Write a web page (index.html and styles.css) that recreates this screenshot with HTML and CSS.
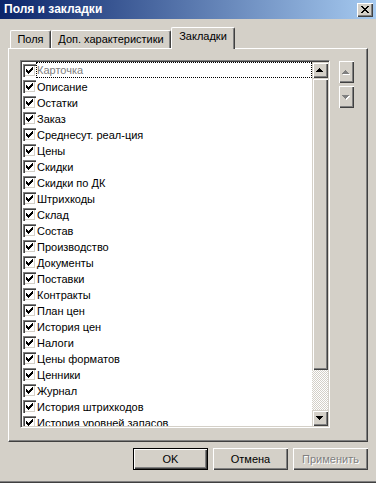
FILE: index.html
```html
<!DOCTYPE html>
<html lang="ru">
<head>
<meta charset="utf-8">
<title>Поля и закладки</title>
<link rel="stylesheet" href="styles.css">
</head>
<body>
<div class="window">
  <div class="titlebar">
    <span class="title">Поля и закладки</span>
    <span class="close"><svg width="16" height="14" viewBox="0 0 16 14" shape-rendering="crispEdges"><path fill="#000" d="M4 3h2v1h-2zM10 3h2v1h-2zM5 4h2v1h-2zM9 4h2v1h-2zM6 5h4v1h-4zM7 6h2v1h-2zM6 7h4v1h-4zM5 8h2v1h-2zM9 8h2v1h-2zM4 9h2v1h-2zM10 9h2v1h-2z"/></svg></span>
  </div>
  <div class="content">
    <div class="tabs">
      <div class="tab tab-fields">Поля</div>
      <div class="tab tab-extra">Доп. характеристики</div>
      <div class="tab tab-marks active">Закладки</div>
    </div>
    <div class="panel">
      <div class="listbox">
        <div class="items">
          <div class="item disabled"><span class="cb"></span><span class="label focus">Карточка</span></div>
          <div class="item"><span class="cb"></span><span class="label">Описание</span></div>
          <div class="item"><span class="cb"></span><span class="label">Остатки</span></div>
          <div class="item"><span class="cb"></span><span class="label">Заказ</span></div>
          <div class="item"><span class="cb"></span><span class="label">Среднесут. реал-ция</span></div>
          <div class="item"><span class="cb"></span><span class="label">Цены</span></div>
          <div class="item"><span class="cb"></span><span class="label">Скидки</span></div>
          <div class="item"><span class="cb"></span><span class="label">Скидки по ДК</span></div>
          <div class="item"><span class="cb"></span><span class="label">Штрихкоды</span></div>
          <div class="item"><span class="cb"></span><span class="label">Склад</span></div>
          <div class="item"><span class="cb"></span><span class="label">Состав</span></div>
          <div class="item"><span class="cb"></span><span class="label">Производство</span></div>
          <div class="item"><span class="cb"></span><span class="label">Документы</span></div>
          <div class="item"><span class="cb"></span><span class="label">Поставки</span></div>
          <div class="item"><span class="cb"></span><span class="label">Контракты</span></div>
          <div class="item"><span class="cb"></span><span class="label">План цен</span></div>
          <div class="item"><span class="cb"></span><span class="label">История цен</span></div>
          <div class="item"><span class="cb"></span><span class="label">Налоги</span></div>
          <div class="item"><span class="cb"></span><span class="label">Цены форматов</span></div>
          <div class="item"><span class="cb"></span><span class="label">Ценники</span></div>
          <div class="item"><span class="cb"></span><span class="label">Журнал</span></div>
          <div class="item"><span class="cb"></span><span class="label">История штрихкодов</span></div>
          <div class="item"><span class="cb"></span><span class="label">История уровней запасов</span></div>
        </div>
        <div class="vscroll">
          <div class="sbtn"><svg width="16" height="16" viewBox="0 0 16 16" shape-rendering="crispEdges"><path fill="#000" d="M7 6h1v1h-1zM6 7h3v1h-3zM5 8h5v1h-5zM4 9h7v1h-7z"/></svg></div>
          <div class="thumb"></div>
          <div class="track"></div>
          <div class="sbtn"><svg width="16" height="16" viewBox="0 0 16 16" shape-rendering="crispEdges"><path fill="#000" d="M4 6h7v1h-7zM5 7h5v1h-5zM6 8h3v1h-3zM7 9h1v1h-1z"/></svg></div>
        </div>
      </div>
      <div class="side">
        <div class="sidebtn"><svg width="15" height="22" viewBox="0 0 15 22" shape-rendering="crispEdges"><path fill="#fff" d="M7 10h1v1h-1zM6 11h3v1h-3zM5 12h5v1h-5zM4 13h7v1h-7z"/><path fill="#808080" d="M6 9h1v1h-1zM5 10h3v1h-3zM4 11h5v1h-5zM3 12h7v1h-7z"/></svg></div>
        <div class="sidebtn"><svg width="15" height="22" viewBox="0 0 15 22" shape-rendering="crispEdges"><path fill="#fff" d="M4 10h7v1h-7zM5 11h5v1h-5zM6 12h3v1h-3zM7 13h1v1h-1z"/><path fill="#808080" d="M3 9h7v1h-7zM4 10h5v1h-5zM5 11h3v1h-3zM6 12h1v1h-1z"/></svg></div>
      </div>
    </div>
    <div class="buttons">
      <button class="btn default"><span class="btn-text">OK</span></button>
      <button class="btn"><span class="btn-text">Отмена</span></button>
      <button class="btn disabled"><span class="btn-text">Применить</span></button>
    </div>
  </div>
</div>
</body>
</html>
```
FILE: styles.css
```css
html, body {
  margin: 0;
  padding: 0;
}
body {
  width: 376px;
  height: 483px;
  overflow: hidden;
  background: #d4d0c8;
  font-family: "Liberation Sans", Arial, sans-serif;
  font-size: 11px;
  color: #000;
}
.window {
  width: 376px;
  height: 483px;
  box-sizing: border-box;
  box-shadow: inset 0 -1px #404040, inset 0 -2px #808080;
}
.titlebar {
  height: 19px;
  background: linear-gradient(to right, #0a246a, #a6caf0);
  display: flex;
  align-items: center;
  justify-content: space-between;
  padding: 0 3px 0 4px;
}
.title {
  color: #fff;
  font-weight: bold;
  font-size: 12px;
  line-height: 19px;
}
.close {
  width: 16px;
  height: 14px;
  background: #d4d0c8;
  box-shadow: inset 1px 1px #fff, inset -1px -1px #404040, inset -2px -2px #808080;
  display: block;
  margin-top: 1px;
}
.close svg { display: block; }
.content {
  padding: 8px 8px 0 8px;
}
.tabs {
  display: flex;
  align-items: flex-end;
  height: 21px;
  padding-left: 2px;
}
.tab {
  box-sizing: border-box;
  height: 18px;
  border-top: 1px solid #fff;
  border-left: 1px solid #fff;
  border-right: 1px solid #404040;
  border-radius: 2px 2px 0 0;
  box-shadow: inset -1px 0 #808080;
  text-align: center;
  padding-top: 2px;
  line-height: 13px;
  white-space: nowrap;
}
.tab-fields { width: 41px; }
.tab-extra { width: 120px; }
.tab-marks { width: 64px; }
.tab.active {
  height: 22px;
  margin-bottom: -1px;
  position: relative;
  z-index: 1;
  background: #d4d0c8;
}
.panel {
  box-sizing: border-box;
  height: 394px;
  border-top: 1px solid #fff;
  border-left: 1px solid #fff;
  border-right: 1px solid #404040;
  border-bottom: 1px solid #404040;
  box-shadow: inset -1px -1px #808080;
  padding: 11px 0 0 11px;
  display: flex;
  align-items: flex-start;
}
.listbox {
  box-sizing: border-box;
  width: 310px;
  height: 368px;
  background: #fff;
  border-top: 1px solid #808080;
  border-left: 1px solid #808080;
  border-right: 1px solid #fff;
  border-bottom: 1px solid #fff;
  box-shadow: inset 1px 1px #404040, inset -1px -1px #d4d0c8;
  padding: 1px;
  display: flex;
}
.items {
  flex: 1;
  height: 364px;
  overflow: hidden;
  padding-left: 1px;
}
.item {
  display: flex;
  height: 16px;
}
.cb {
  box-sizing: border-box;
  flex: none;
  width: 13px;
  height: 13px;
  margin-top: 2px;
  background-color: #fff;
  background-image: url("data:image/svg+xml;utf8,<svg xmlns='http://www.w3.org/2000/svg' width='13' height='13' shape-rendering='crispEdges'><path fill='black' d='M9 3h1v1h-1zM8 4h2v1h-2zM3 5h1v1h-1zM7 5h3v1h-3zM3 6h2v1h-2zM6 6h3v1h-3zM3 7h5v1h-5zM4 8h3v1h-3zM5 9h1v1h-1z'/></svg>");
  box-shadow: inset 1px 1px #808080, inset 2px 2px #404040, inset -1px -1px #fff, inset -2px -2px #d4d0c8;
}
.label {
  flex: 1;
  box-sizing: border-box;
  height: 16px;
  line-height: 16px;
  border: 1px solid transparent;
  padding-left: 0;
  white-space: nowrap;
}
.label.focus {
  border: 1px dotted #000;
  line-height: 14px;
}
.item.disabled .label {
  color: #808080;
}
.vscroll {
  width: 16px;
  flex: none;
  display: flex;
  flex-direction: column;
}
.sbtn {
  width: 16px;
  height: 16px;
  background: #d4d0c8;
  box-shadow: inset 1px 1px #d4d0c8, inset 2px 2px #fff, inset -1px -1px #404040, inset -2px -2px #808080;
}
.sbtn svg { display: block; }
.thumb {
  height: 292px;
  background: #d4d0c8;
  box-shadow: inset 1px 1px #d4d0c8, inset 2px 2px #fff, inset -1px -1px #404040, inset -2px -2px #808080;
}
.track {
  height: 40px;
  background: repeating-conic-gradient(#fff 0 25%, #d4d0c8 0 50%) 0 0 / 2px 2px;
}
.side {
  margin-left: 9px;
  margin-top: 1px;
  display: flex;
  flex-direction: column;
  gap: 3px;
}
.sidebtn {
  width: 15px;
  height: 22px;
  background: #d4d0c8;
  box-shadow: inset 1px 1px #fff, inset -1px -1px #404040, inset -2px -2px #808080;
}
.sidebtn svg { display: block; }
.buttons {
  display: flex;
  justify-content: flex-end;
  gap: 5px;
  margin-top: 6px;
}
.btn {
  box-sizing: border-box;
  width: 75px;
  height: 22px;
  margin: 0;
  padding: 0;
  border: none;
  background: #d4d0c8;
  font: inherit;
  color: #000;
  box-shadow: inset 1px 1px #fff, inset -1px -1px #404040, inset -2px -2px #808080;
}
.btn-text {
  font-family: "Liberation Sans", Arial, sans-serif;
  font-size: 11px;
  font-weight: 400;
}
.btn.default {
  box-shadow: inset 0 0 0 1px #000, inset 2px 2px #fff, inset -2px -2px #404040, inset -3px -3px #808080;
}
.btn.disabled {
  color: #808080;
  text-shadow: 1px 1px #fff;
}
```
